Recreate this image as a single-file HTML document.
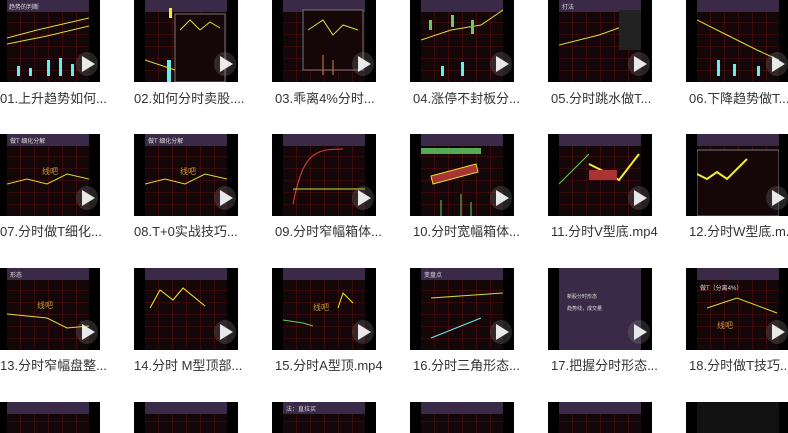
<!DOCTYPE html>
<html><head><meta charset="utf-8"><style>
*{margin:0;padding:0;box-sizing:border-box}
html,body{width:788px;height:433px;background:#fff;overflow:hidden}
body{position:relative;font-family:"Liberation Sans","Noto Sans CJK SC",sans-serif}
.t{position:absolute;width:104px;height:82px;background:#000;overflow:hidden}
.c{position:absolute;left:11px;top:0;width:82px;height:82px;background:
linear-gradient(#3a2a48 0,#3a2a48 12px,transparent 12px),
repeating-linear-gradient(90deg,transparent 0 13px,rgba(150,20,20,.3) 13px 14px),
repeating-linear-gradient(0deg,transparent 0 11px,rgba(150,20,20,.25) 11px 12px),
#140709}
.r4{height:31px}
.r4 .c{height:31px}
.c svg{position:absolute;left:0;top:0}
.p{position:absolute;left:80px;top:52px;width:22px;height:24px;border-radius:50%;background:rgba(140,140,140,.25)}
.p:after{content:"";position:absolute;left:6px;top:4px;border-left:13px solid #e8e8e8;border-top:8px solid transparent;border-bottom:8px solid transparent}
.l{position:absolute;font-size:13px;color:#333;white-space:nowrap;line-height:16px}
</style></head><body>
<!-- row 1 -->
<div class="t" style="left:-4px;top:0"><div class="c"><svg width="82" height="82"><polyline points="0,38 30,30 82,18" stroke="#dd3" fill="none"/><polyline points="0,44 40,36 82,26" stroke="#dd3" fill="none"/><g fill="#6ee"><rect x="10" y="66" width="3" height="10"/><rect x="22" y="68" width="3" height="8"/><rect x="40" y="60" width="3" height="16"/><rect x="52" y="58" width="3" height="18"/><rect x="64" y="64" width="3" height="12"/></g><text x="2" y="9" font-size="6" fill="#ddd">趋势的判断</text></svg></div><div class="p"></div></div>
<div class="t" style="left:134px;top:0"><div class="c"><svg width="82" height="82"><rect x="30" y="14" width="50" height="68" fill="#150608" stroke="#777"/><polyline points="35,30 45,20 55,30 65,22 75,28" stroke="#dd3" fill="none"/><rect x="22" y="60" width="4" height="22" fill="#6ee"/><rect x="24" y="8" width="3" height="10" fill="#ee3"/><polyline points="0,60 30,70" stroke="#dd3" fill="none"/></svg></div><div class="p"></div></div>
<div class="t" style="left:272px;top:0"><div class="c"><svg width="82" height="82"><rect x="20" y="10" width="60" height="60" fill="#150608" stroke="#777"/><polyline points="25,30 40,20 50,35 60,25 75,30" stroke="#dd3" fill="none"/><g stroke="#c84" ><line x1="40" y1="75" x2="40" y2="55"/><line x1="50" y1="75" x2="50" y2="60"/></g></svg></div><div class="p"></div></div>
<div class="t" style="left:410px;top:0"><div class="c"><svg width="82" height="82"><polyline points="0,40 30,30 60,25 82,10" stroke="#dd3" fill="none"/><g fill="#6c6"><rect x="8" y="20" width="3" height="10"/><rect x="30" y="15" width="3" height="12"/><rect x="50" y="20" width="3" height="14"/></g><g fill="#6ee"><rect x="20" y="66" width="3" height="10"/><rect x="40" y="62" width="3" height="14"/></g></svg></div><div class="p"></div></div>
<div class="t" style="left:548px;top:0"><div class="c"><svg width="82" height="82"><polyline points="0,45 40,35 82,20" stroke="#dd3" fill="none"/><rect x="60" y="10" width="22" height="40" fill="#222"/><text x="3" y="9" font-size="6" fill="#ddd">打法</text></svg></div><div class="p"></div></div>
<div class="t" style="left:686px;top:0"><div class="c"><svg width="82" height="82"><polyline points="0,20 30,35 60,50 82,60" stroke="#dd3" fill="none"/><g fill="#6ee"><rect x="20" y="60" width="3" height="16"/><rect x="36" y="64" width="3" height="12"/><rect x="60" y="66" width="3" height="10"/></g></svg></div><div class="p"></div></div>
<div class="l" style="left:0;top:91px">01.上升趋势如何...</div>
<div class="l" style="left:134px;top:91px">02.如何分时卖股....</div>
<div class="l" style="left:275px;top:91px">03.乖离4%分时...</div>
<div class="l" style="left:413px;top:91px">04.涨停不封板分...</div>
<div class="l" style="left:551px;top:91px">05.分时跳水做T...</div>
<div class="l" style="left:689px;top:91px">06.下降趋势做T...</div>
<!-- row 2 -->
<div class="t" style="left:-4px;top:134px"><div class="c"><svg width="82" height="82"><text x="3" y="9" font-size="6" fill="#ddd">做T 细化分解</text><polyline points="0,50 20,45 40,50 60,40 82,45" stroke="#dd3" fill="none"/><text x="35" y="40" font-size="8" fill="#c93">线吧</text></svg></div><div class="p"></div></div>
<div class="t" style="left:134px;top:134px"><div class="c"><svg width="82" height="82"><text x="3" y="9" font-size="6" fill="#ddd">做T 细化分解</text><polyline points="0,50 20,45 40,50 60,40 82,45" stroke="#dd3" fill="none"/><text x="35" y="40" font-size="8" fill="#c93">线吧</text></svg></div><div class="p"></div></div>
<div class="t" style="left:272px;top:134px"><div class="c"><svg width="82" height="82"><path d="M10,70 C20,20 30,15 60,15" stroke="#d44" fill="none"/><polyline points="10,55 82,55" stroke="#dd3" fill="none"/></svg></div><div class="p"></div></div>
<div class="t" style="left:410px;top:134px"><div class="c"><svg width="82" height="82"><rect x="0" y="14" width="60" height="6" fill="#5a5"/><polygon points="10,42 55,30 57,38 12,50" fill="#a33" stroke="#dd3"/><g stroke="#6c6"><line x1="20" y1="82" x2="20" y2="66"/><line x1="40" y1="82" x2="40" y2="60"/><line x1="50" y1="82" x2="50" y2="68"/></g></svg></div><div class="p"></div></div>
<div class="t" style="left:548px;top:134px"><div class="c"><svg width="82" height="82"><polyline points="30,30 50,40 60,46 80,20" stroke="#ee3" stroke-width="2" fill="none"/><polyline points="0,50 30,20" stroke="#6c6" fill="none"/><rect x="30" y="36" width="28" height="10" fill="#a33"/></svg></div><div class="p"></div></div>
<div class="t" style="left:686px;top:134px"><div class="c"><svg width="82" height="82"><rect x="0" y="16" width="82" height="66" fill="#150608" stroke="#777"/><polyline points="0,40 10,45 20,38 30,45 40,35 50,25" stroke="#ee3" stroke-width="2" fill="none"/></svg></div><div class="p"></div></div>
<div class="l" style="left:0;top:224px">07.分时做T细化...</div>
<div class="l" style="left:134px;top:224px">08.T+0实战技巧...</div>
<div class="l" style="left:275px;top:224px">09.分时窄幅箱体...</div>
<div class="l" style="left:413px;top:224px">10.分时宽幅箱体...</div>
<div class="l" style="left:551px;top:224px">11.分时V型底.mp4</div>
<div class="l" style="left:689px;top:224px">12.分时W型底.m...</div>
<!-- row 3 -->
<div class="t" style="left:-4px;top:268px"><div class="c"><svg width="82" height="82"><text x="3" y="9" font-size="6" fill="#ddd">形态</text><polyline points="0,46 40,50 60,60 82,58" stroke="#dd3" fill="none"/><text x="30" y="40" font-size="8" fill="#c93">线吧</text></svg></div><div class="p"></div></div>
<div class="t" style="left:134px;top:268px"><div class="c"><svg width="82" height="82"><polyline points="5,40 15,22 28,32 38,20 60,38" stroke="#ee3" fill="none"/></svg></div><div class="p"></div></div>
<div class="t" style="left:272px;top:268px"><div class="c"><svg width="82" height="82"><polyline points="0,52 20,55 30,58" stroke="#6c6" fill="none"/><polyline points="55,40 60,25 70,35" stroke="#ee3" fill="none"/><text x="30" y="42" font-size="8" fill="#c93">线吧</text></svg></div><div class="p"></div></div>
<div class="t" style="left:410px;top:268px"><div class="c"><svg width="82" height="82"><text x="3" y="9" font-size="6" fill="#ddd">变盘点</text><polyline points="10,30 82,25" stroke="#dd3" fill="none"/><polyline points="10,70 60,50" stroke="#6ee" fill="none"/></svg></div><div class="p"></div></div>
<div class="t" style="left:548px;top:268px"><div class="c" style="background:#3a2a48"><svg width="82" height="82"><text x="8" y="30" font-size="5" fill="#ddd">新股分时形态</text><text x="8" y="42" font-size="5" fill="#ddd">趋势线，成交量</text></svg></div><div class="p"></div></div>
<div class="t" style="left:686px;top:268px"><div class="c"><svg width="82" height="82"><text x="3" y="22" font-size="6" fill="#ddd">做T（分离4%）</text><polyline points="10,40 40,30 80,45" stroke="#dd3" fill="none"/><text x="20" y="60" font-size="8" fill="#c93">线吧</text></svg></div><div class="p"></div></div>
<div class="l" style="left:0;top:358px">13.分时窄幅盘整...</div>
<div class="l" style="left:134px;top:358px">14.分时 M型顶部...</div>
<div class="l" style="left:275px;top:358px">15.分时A型顶.mp4</div>
<div class="l" style="left:413px;top:358px">16.分时三角形态...</div>
<div class="l" style="left:551px;top:358px">17.把握分时形态...</div>
<div class="l" style="left:689px;top:358px">18.分时做T技巧...</div>
<!-- row 4 -->
<div class="t r4" style="left:-4px;top:402px"><div class="c"></div></div>
<div class="t r4" style="left:134px;top:402px"><div class="c"></div></div>
<div class="t r4" style="left:272px;top:402px"><div class="c"><svg width="82" height="31"><text x="3" y="9" font-size="6" fill="#ddd">法：直拉买</text></svg></div></div>
<div class="t r4" style="left:410px;top:402px"><div class="c"></div></div>
<div class="t r4" style="left:548px;top:402px"><div class="c"></div></div>
<div class="t r4" style="left:686px;top:402px"><div class="c" style="background:#111"></div></div>
</body></html>
